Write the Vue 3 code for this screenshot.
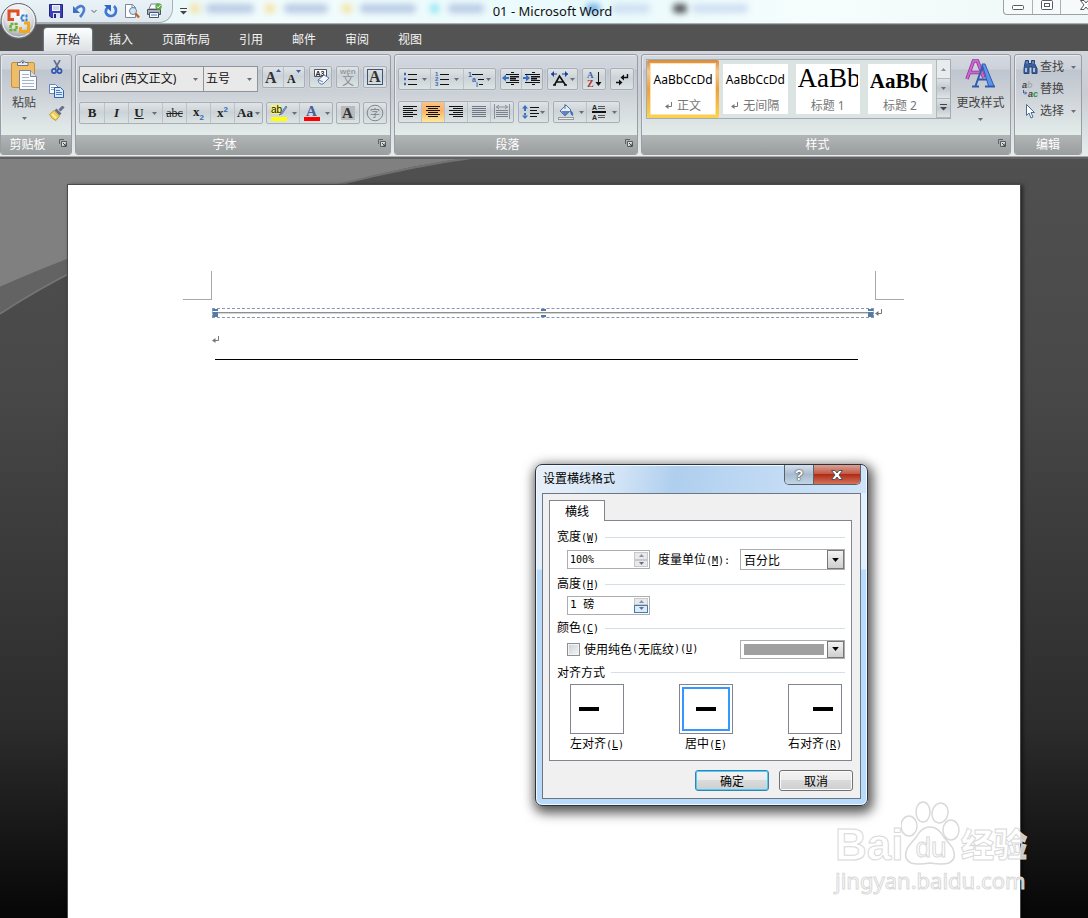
<script setup>
import { ref, h } from 'vue'

const tabs = ['开始', '插入', '页面布局', '引用', '邮件', '审阅', '视图']
const activeTab = ref('开始')
const activeStyle = ref('正文')
const styles = [
  { name: '正文', sample: 'AaBbCcDd', kind: 'plain', mark: true },
  { name: '无间隔', sample: 'AaBbCcDd', kind: 'plain', mark: true },
  { name: '标题 1', sample: 'AaBb', kind: 'h1' },
  { name: '标题 2', sample: 'AaBb(', kind: 'h2' },
]
const widthValue = ref('100%')
const heightValue = ref('1 磅')
const unit = ref('百分比')
const solid = ref(false)
const align = ref('E')
const aligns = [
  { key: 'L', name: '左对齐', side: 'left' },
  { key: 'E', name: '居中', side: 'mid' },
  { key: 'R', name: '右对齐', side: 'right' },
]
const blurs = [
  { x: 190, c: '#f3e2a0', w: 10 }, { x: 206, c: '#b9cbe4', w: 48 },
  { x: 265, c: '#f3e2a0', w: 10 }, { x: 284, c: '#b9cbe4', w: 44 },
  { x: 342, c: '#f3e2a0', w: 10 }, { x: 360, c: '#b9cbe4', w: 56 },
  { x: 430, c: '#8de6f2', w: 9 }, { x: 448, c: '#b9cbe4', w: 36 },
  { x: 586, c: '#6fb0e6', w: 14 }, { x: 612, c: '#cfdff2', w: 38 },
  { x: 673, c: '#4f5257', w: 14 }, { x: 692, c: '#cfdff2', w: 56 },
]

const line = (x1, x2, y, c = '#111') => `<path d="M${x1} ${y}.5H${x2}" stroke="${c}" fill="none"/>`
const rows = (list, c) => list.map(([a, b, y]) => line(a, b, y, c)).join('')

const icons = {
  save: [14, 14, '<path d="M.5.5h13v13H2l-1.500-1.500z" fill="#3b41b5" stroke="#23267c"/><path d="M3 1h8v6H3z" fill="#f4f6ff"/><path d="M4 3h6M4 5h6" stroke="#a9b4d6"/><path d="M4 9h7v5H4z" fill="#dfe3f2"/><path d="M5 10h2v4H5z" fill="#23267c"/>'],
  undo: [14, 14, '<path d="M3 5Q8 0 10.500 3.500Q12.500 7 7 13" fill="none" stroke="#4a7fd0" stroke-width="2.600"/><path d="M0 2v7h7z" fill="#3d6fc0"/>'],
  redo: [14, 14, '<path d="M4 3Q1 6 2 9Q4 12.500 7.500 12Q12 11 12 6.500Q12 4 10 2" fill="none" stroke="#3f78d0" stroke-width="2.600"/><path d="M0 1h7v6.500z" fill="#3268c4"/>'],
  chev: [8, 5, '<path d="M1.500 1l2.500 2.500L6.500 1" fill="none" stroke="#555"/>'],
  preview: [16, 16, '<path d="M1.500 1.500h7l3 3v10h-10z" fill="#fff" stroke="#7c8799"/><path d="M8 1.500v3h3.500" fill="none" stroke="#7c8799"/><circle cx="9" cy="8" r="3.500" fill="#cfe6f6" stroke="#6d87a2"/><path d="M11.500 10.500l3.500 4" stroke="#c26a25" stroke-width="2.500"/>'],
  print: [17, 16, '<path d="M5 1h8l-2 5H3z" fill="#fff" stroke="#7a8290"/><path d="M1.500 6.500h13v5h-13z" fill="#a9b1bf" stroke="#4c5361"/><path d="M3.500 9.500h9v5h-9z" fill="#f7f9fc" stroke="#4c5361"/><path d="M5 12h6" stroke="#3e7bd0"/><circle cx="12.500" cy="3.500" r="3.200" fill="#5cae48"/><path d="M11 3.500l1.200 1.400L14.500 2" stroke="#fff" fill="none"/>'],
  more: [7, 7, '<path d="M0 .5h7" stroke="#444"/><path d="M0 3h7L3.500 6.500z" fill="#444"/>'],
  paste: [28, 32, '<rect x="1.500" y="3.500" width="23" height="25" rx="1.500" fill="#eebd66" stroke="#c4913a"/><path d="M7.500 6.500v-3h3q2-4 4.500 0h3v3z" fill="#e9edf2" stroke="#6d7683"/><circle cx="12.800" cy="3.500" r="1" fill="#545c68"/><path d="M9.500 11.500h11l6 6v13h-17z" fill="#fafcff" stroke="#7b8798"/><path d="M20.500 11.500v6h6" fill="#d6dfea" stroke="#7b8798"/><path d="M12 15.500h7M12 18.500h7M12 21.500h12M12 24.500h12M12 27.500h12" stroke="#a6b4c8"/>'],
  cut: [12, 15, '<path d="M3 0l5 9M9 0L4 9" stroke="#60708a" stroke-width="1.600"/><circle cx="3" cy="11" r="2.100" fill="none" stroke="#2f55b0" stroke-width="1.600"/><circle cx="8.500" cy="11" r="2.100" fill="none" stroke="#2f55b0" stroke-width="1.600"/>'],
  copy: [16, 14, '<path d="M.5.5h6l3 3v6h-9z" fill="#fff" stroke="#5f86bd"/><path d="M2 3.500h4M2 5.500h5" stroke="#7b9ccd"/><path d="M5.500 3.500h6l3 3v7h-9z" fill="#dceafb" stroke="#2f62a8"/><path d="M7 6.500h4M7 8.500h6M7 10.500h6" stroke="#4d7fc4"/>'],
  brush: [16, 15, '<path d="M14.500 .5l-4 4" stroke="#6a6f8c" stroke-width="3"/><path d="M7.500 2.500l5 5-2 2-5-5z" fill="#6d6f8a"/><path d="M5 4.500l5.500 5.500-3.500 4.500q-4-1-6.500-6z" fill="#f0d15a" stroke="#b3922b" stroke-width=".8"/><path d="M3 8l4 4" stroke="#fff6c0" stroke-width="1.500"/>'],
  launch: [8, 8, '<path d="M.5 5V.5H5" fill="none" stroke="#5c6266"/><path d="M2.500 2.500h5v5h-5z" fill="#d8dcdc" stroke="#555b60"/><path d="M4 4l3 3M7 4.500V7H4.500" stroke="#44484c" fill="none"/>'],
  arrow: [5, 3, '<path d="M0 0h5L2.500 3z" fill="#6a6f76"/>'],
  erase: [18, 18, '<path d="M2.500 1.500h12v7h-12z" fill="#fff" stroke="#47536a"/><text x="3.500" y="7.500" font-size="7" font-weight="700" font-family="Liberation Sans" fill="#222">A3</text><path d="M6 12l6-5 5 3-6 6q-4 1-5-4z" fill="#f4f7ff" stroke="#6077a8"/><path d="M7 12l4 2" stroke="#6077a8"/>'],
  wen: [18, 20, '<text x="1" y="7" font-size="8" font-weight="700" font-family="Liberation Sans" fill="#959a9f">wén</text><text x="3" y="18" font-size="12" font-family="Noto Sans CJK SC" fill="#8c9196">文</text>'],
  frameA: [18, 18, '<rect x="1.500" y="1.500" width="15" height="15" fill="none" stroke="#3f5576"/><text x="3" y="14" font-size="16" font-weight="700" font-family="Liberation Serif" fill="#333">A</text>'],
  growA: [18, 18, '<text x="1" y="15" font-size="16" font-weight="700" font-family="Liberation Serif" fill="#333">A</text><path d="M12 4h5l-2.500-3z" fill="#3b5aa5"/>'],
  shrinkA: [18, 18, '<text x="2" y="15" font-size="12" font-weight="700" font-family="Liberation Serif" fill="#222">A</text><path d="M11 2h5l-2.500 3z" fill="#3b5aa5"/>'],
  mark: [18, 18, '<rect x="1" y="1" width="10" height="9" fill="#f7f36b"/><text x="1" y="9" font-size="10" font-family="Liberation Sans" fill="#111">ab</text><path d="M16 2l-5 7-2 2 3-1 5-7z" fill="#8da4c8" stroke="#56709c" stroke-width=".8"/><rect x="1" y="13" width="16" height="4" fill="#ff0"/>'],
  color: [18, 18, '<text x="3" y="12" font-size="15" font-weight="700" font-family="Liberation Serif" fill="#44619b">A</text><rect x="1" y="13" width="16" height="4" fill="#f00"/>'],
  shadeA: [18, 18, '<rect x="2" y="2" width="14" height="14" fill="#bbb"/><text x="3" y="14" font-size="15" font-weight="700" font-family="Liberation Serif" fill="#333">A</text>'],
  circleZi: [18, 18, '<circle cx="9" cy="9" r="7.800" fill="none" stroke="#7f878c"/><text x="4" y="13" font-size="10" font-family="Noto Sans CJK SC" fill="#777e83">字</text>'],
  bullets: [16, 16, '<path d="M2 3h2M2 8h2M2 13h2" stroke="#3a66b2" stroke-width="2.600"/>' + rows([[6, 15, 3], [6, 15, 8], [6, 15, 13]])],
  numbers: [16, 16, '<g font-size="6" font-weight="700" font-family="Liberation Sans" fill="#3a66b2"><text x="1" y="5">1</text><text x="1" y="10">2</text><text x="1" y="15">3</text></g>' + rows([[6, 15, 3], [6, 15, 8], [6, 15, 13]])],
  multi: [18, 16, '<g font-size="7" font-weight="700" font-family="Liberation Sans" fill="#3a66b2"><text x="1" y="6">1</text><text x="5" y="11">a</text><text x="9" y="16">i</text></g>' + rows([[5, 16, 3], [11, 17, 8], [12, 16, 13]])],
  outdent: [18, 16, rows([[9, 12, 1], [4, 17, 3], [8, 17, 5], [8, 14, 7], [8, 17, 9], [4, 17, 11], [9, 12, 13]]) + '<path d="M8 6h9M8 8h6" stroke="#111"/><path d="M0 7l4-3.500v7zM4 6h3v2H4z" fill="#3b6fc4"/>'],
  indent: [18, 16, rows([[9, 12, 1], [2, 17, 3], [8, 17, 5], [8, 14, 7], [8, 17, 9], [2, 17, 11], [9, 12, 13]]) + '<path d="M8 6h9M8 8h6" stroke="#111"/><path d="M7 7L3 3.500v7zM0 6h3v2H0z" fill="#3b6fc4"/>'],
  asian: [19, 16, '<path d="M3 14h3M14 14h3M4.500 14L9.500 5l6 9M6 11h8" stroke="#111" fill="none" stroke-width="1.600"/><path d="M1 3h6M12 3h6" stroke="#203c9a"/><path d="M4 0L1 3l3 3zM15 0l3 3-3 3z" fill="#203c9a"/>'],
  sort: [18, 18, '<text x="2" y="8" font-size="9" font-weight="700" font-family="Liberation Serif" fill="#3b64ae">A</text><text x="2" y="17" font-size="10" font-weight="700" font-family="Liberation Serif" fill="#a83838">Z</text><path d="M13.500 2v13" stroke="#111"/><path d="M10.500 12h6l-3 4z" fill="#111"/>'],
  marks: [16, 16, '<path d="M13.500 3v3.500H8M2 11.500h5" fill="none" stroke="#111" stroke-width="1.400"/><path d="M10 3.500v6L6.500 6.500zM5 8.500v6l3.500-3z" fill="#111"/>'],
  left: [16, 16, rows([[1, 15, 2], [1, 11, 4], [1, 15, 6], [1, 11, 8], [1, 15, 10], [1, 11, 12]])],
  center: [16, 16, rows([[1, 15, 2], [3, 13, 4], [1, 15, 6], [3, 13, 8], [1, 15, 10], [3, 13, 12]])],
  right: [16, 16, rows([[1, 15, 2], [5, 15, 4], [1, 15, 6], [5, 15, 8], [1, 15, 10], [5, 15, 12]])],
  justify: [16, 16, rows([[1, 15, 2], [1, 15, 4], [1, 15, 6], [1, 15, 8], [1, 15, 10], [1, 15, 12]], '#6f7684')],
  spread: [16, 16, '<path d="M.5 0v15M15.500 0v15M2 3h12M5 1L2.500 3 5 5M11 1l2.500 2L11 5" stroke="#8c9199" fill="none"/>' + rows([[2, 14, 6], [2, 14, 8], [2, 14, 10], [2, 14, 12]], '#7d838c')],
  spacing: [17, 16, '<path d="M0 4.500L3 1l3 3.500zM2 4h2v3H2zM0 11.500L3 15l3-3.500zM2 9h2v3H2z" fill="#3b6fc4"/>' + rows([[8, 17, 3], [8, 15, 6], [8, 17, 9], [8, 15, 12]])],
  bucket: [18, 18, '<path d="M3 8l6-6 5 5-6 6z" fill="#e6eef9" stroke="#58719b"/><path d="M4 8h9l-5 5z" fill="#5b84c4"/><path d="M8 1v5" stroke="#58719b"/><path d="M13 7q4 2 3 6-3-1-3-6z" fill="#3f6db8"/><rect x="1.500" y="14.500" width="15" height="2" fill="#eee" stroke="#999"/>'],
  borders: [18, 18, '<g font-size="7" font-weight="700" font-family="Liberation Sans" fill="#222"><text x="2" y="7">A</text><text x="2" y="17">A</text></g><path d="M2 9h14" stroke="#111" stroke-width="2"/>' + rows([[8, 15, 3], [8, 15, 5], [8, 15, 12], [8, 15, 14]], '#555')],
  up: [5, 3, '<path d="M0 3h5L2.500 0z" fill="#8b9096"/>'],
  changeStyles: [32, 30, '<path d="M2 20L8.500 2h4L19 19M5 13.500h9" fill="none" stroke="#8d3a96" stroke-width="3.600"/><path d="M2 20L8.500 2h4L19 19M5 13.500h9" fill="none" stroke="#cc66d2" stroke-width="2"/><path d="M7 27.500h7M20 27.500h10M10.500 27L18 6M17 6l9 21M13 20.500h9" fill="none" stroke="#2f5cae" stroke-width="2"/><path d="M17 5h3l9 22h-5.500z" fill="#5b93e6" stroke="#2f5cae"/>'],
  find: [15, 14, '<path d="M2.500 .5h3v3h3v-3h3v3l2.500 5v5H9V7H6v6.500H1v-5z" fill="#3b5f9c" stroke="#274577"/><path d="M3 8v4M11 8v4" stroke="#dce9fb" stroke-width="1.400"/><path d="M4 1.500v2M10 1.500v2" stroke="#9dbbe6"/>'],
  replace: [17, 17, '<g font-size="9" font-weight="700" font-family="Liberation Sans"><text x="0" y="7" fill="#444">a<tspan fill="#aaa">b</tspan></text><text x="6" y="16" fill="#444">a<tspan fill="#2d9a3a">c</tspan></text></g><path d="M1.500 9v3h3M3 10.500l1.500 1.500L3 13.500" fill="none" stroke="#3b64ae"/>'],
  pick: [10, 15, '<path d="M1.500.5v11l2.500-2.500 2 5 2-1-2-4.500h3.500z" fill="#fff" stroke="#4c6a94"/>'],
  min: [12, 5, '<rect x=".5" y=".5" width="11" height="4" rx="1" fill="#fff" stroke="#555b63"/>'],
  max: [12, 10, '<rect x=".5" y=".5" width="11" height="9" rx="1" fill="#fff" stroke="#555b63"/><rect x="3.500" y="3.500" width="5" height="3" fill="#fff" stroke="#555b63"/>'],
  close: [12, 10, '<path d="M.5.5H4l2 2.500L8 .5h3.500L8 5l3.500 4.500H8L6 7 4 9.500H.5L4 5z" fill="#fff" stroke="#4f545c"/>'],
  ret: [8, 8, '<path d="M6.500 0v4.500H1" fill="none" stroke="#777"/><path d="M3.500 2v5L0 4.500z" fill="#777"/>'],
  orb: [38, 38, '<defs><radialGradient id="orbFill" cx=".5" cy=".3" r=".75"><stop offset="0" stop-color="#fff"/><stop offset=".55" stop-color="#dcdfe3"/><stop offset="1" stop-color="#85898f"/></radialGradient></defs><circle cx="18.500" cy="19" r="17.500" fill="url(#orbFill)" stroke="#63666b"/><circle cx="18.500" cy="19" r="16" fill="none" stroke="#fff" stroke-opacity=".8"/><g fill="none"><path d="M14 17.500H9V9h9v5" stroke="#dd4f24" stroke-width="3"/><path d="M21.500 13.500h5v5h-5z" stroke="#2f7fd2" stroke-width="2" stroke-dasharray="3 1"/><path d="M10.500 22h6v6h-6z" stroke="#6fae35" stroke-width="2.400" stroke-dasharray="3 1"/><path d="M20.500 25v4.500h8V21H24" stroke="#f2a81d" stroke-width="3"/></g>'],
}
const Ico = (p) => {
  const [w, hh, body] = icons[p.n]
  return h('svg', { width: w, height: hh, viewBox: `0 0 ${w} ${hh}`, innerHTML: body, 'aria-hidden': 'true' })
}
Ico.props = ['n']
</script>

<template>
  <div class="app">
    <header class="titlebar">
      <div class="behind">
        <i v-for="b in blurs" :key="b.x" :style="{ left: b.x + 'px', width: b.w + 'px', background: b.c }"></i>
      </div>
      <div class="quick">
        <button aria-label="保存"><Ico n="save" /></button>
        <button aria-label="撤销"><Ico n="undo" /></button>
        <button class="tiny" aria-label="撤销列表"><Ico n="chev" /></button>
        <button aria-label="重复"><Ico n="redo" /></button>
        <button aria-label="打印预览"><Ico n="preview" /></button>
        <button aria-label="快速打印"><Ico n="print" /></button>
      </div>
      <button class="qmore" aria-label="自定义"><Ico n="more" /></button>
      <h1>01 - Microsoft Word</h1>
      <div class="winbtns">
        <button aria-label="最小化"><Ico n="min" /></button>
        <button aria-label="还原"><Ico n="max" /></button>
        <button aria-label="关闭"><Ico n="close" /></button>
      </div>
    </header>
    <button class="orb" aria-label="Office"><Ico n="orb" /></button>

    <nav class="tabs">
      <button v-for="t in tabs" :key="t" :class="{ on: t === activeTab }" @click="activeTab = t">{{ t }}</button>
    </nav>

    <section class="ribbon">
      <div class="group clip">
        <div class="body">
          <button class="big"><Ico n="paste" /><span>粘贴</span><Ico n="arrow" /></button>
          <div class="stack">
            <button aria-label="剪切"><Ico n="cut" /></button>
            <button aria-label="复制"><Ico n="copy" /></button>
            <button aria-label="格式刷"><Ico n="brush" /></button>
          </div>
        </div>
        <footer><span>剪贴板</span><button aria-label="剪贴板选项"><Ico n="launch" /></button></footer>
      </div>

      <div class="group font">
        <div class="body rows">
          <div class="row">
            <div class="combos">
              <label class="combo fam"><select aria-label="字体"><option>Calibri (西文正文)</option></select><Ico n="arrow" /></label>
              <label class="combo size"><select aria-label="字号"><option>五号</option></select><Ico n="arrow" /></label>
            </div>
            <div class="bar w43"><button aria-label="增大"><Ico n="growA" /></button><button aria-label="缩小"><Ico n="shrinkA" /></button></div>
            <div class="bar w23"><button aria-label="清除格式"><Ico n="erase" /></button></div>
            <div class="bar w23"><button aria-label="拼音"><Ico n="wen" /></button></div>
            <div class="bar w24"><button aria-label="字符边框"><Ico n="frameA" /></button></div>
          </div>
          <div class="row second">
            <div class="bar letters">
              <button><b>B</b></button>
              <button><em>I</em></button>
              <button class="wide"><u>U</u><Ico n="arrow" /></button>
              <button><s>abc</s></button>
              <button><b>x<sub>2</sub></b></button>
              <button><b>x<sup>2</sup></b></button>
              <button class="case"><b>Aa</b><Ico n="arrow" /></button>
            </div>
            <div class="bar w67"><button aria-label="突出显示"><Ico n="mark" /><Ico n="arrow" /></button><button aria-label="字体颜色"><Ico n="color" /><Ico n="arrow" /></button></div>
            <div class="bar w24"><button aria-label="底纹"><Ico n="shadeA" /></button></div>
            <div class="bar w24"><button aria-label="带圈字符"><Ico n="circleZi" /></button></div>
          </div>
        </div>
        <footer><span>字体</span><button aria-label="字体选项"><Ico n="launch" /></button></footer>
      </div>

      <div class="group para">
        <div class="body rows">
          <div class="row">
            <div class="bar w98"><button aria-label="项目符号"><Ico n="bullets" /><Ico n="arrow" /></button><button aria-label="编号"><Ico n="numbers" /><Ico n="arrow" /></button><button class="tight" aria-label="多级列表"><Ico n="multi" /><Ico n="arrow" /></button></div>
            <div class="bar w43"><button aria-label="减少缩进"><Ico n="outdent" /></button><button aria-label="增加缩进"><Ico n="indent" /></button></div>
            <div class="bar w31"><button class="tight" aria-label="中文版式"><Ico n="asian" /><Ico n="arrow" /></button></div>
            <div class="bar w24"><button aria-label="排序"><Ico n="sort" /></button></div>
            <div class="bar w24"><button aria-label="编辑标记"><Ico n="marks" /></button></div>
          </div>
          <div class="row second">
            <div class="bar w116">
              <button aria-label="左对齐"><Ico n="left" /></button>
              <button class="hot" aria-label="居中"><Ico n="center" /></button>
              <button aria-label="右对齐"><Ico n="right" /></button>
              <button aria-label="两端对齐"><Ico n="justify" /></button>
              <button aria-label="分散对齐"><Ico n="spread" /></button>
            </div>
            <div class="bar w31"><button class="tight" aria-label="行距"><Ico n="spacing" /><Ico n="arrow" /></button></div>
            <div class="bar w67"><button aria-label="底纹颜色"><Ico n="bucket" /><Ico n="arrow" /></button><button aria-label="边框"><Ico n="borders" /><Ico n="arrow" /></button></div>
          </div>
        </div>
        <footer><span>段落</span><button aria-label="段落选项"><Ico n="launch" /></button></footer>
      </div>

      <div class="group look">
        <div class="body">
          <div class="gallery">
            <button v-for="s in styles" :key="s.name" class="card" :class="{ sel: s.name === activeStyle }" @click="activeStyle = s.name">
              <span class="paper">
                <span class="sample" :class="s.kind">{{ s.sample }}</span>
                <span class="cap"><Ico v-if="s.mark" n="ret" />{{ s.name }}</span>
              </span>
            </button>
            <div class="scroll">
              <button aria-label="上一行"><Ico n="up" /></button>
              <button aria-label="下一行"><Ico n="arrow" /></button>
              <button aria-label="其他"><Ico n="more" /></button>
            </div>
          </div>
          <button class="big change"><Ico n="changeStyles" /><span>更改样式</span><Ico n="arrow" /></button>
        </div>
        <footer><span>样式</span><button aria-label="样式选项"><Ico n="launch" /></button></footer>
      </div>

      <div class="group edit">
        <div class="body lines">
          <button><i><Ico n="find" /></i>查找<Ico n="arrow" /></button>
          <button><i><Ico n="replace" /></i>替换</button>
          <button><i><Ico n="pick" /></i>选择<Ico n="arrow" /></button>
        </div>
        <footer><span>编辑</span></footer>
      </div>
    </section>

    <main class="desk">
      <svg class="swoosh" width="640" height="400" viewBox="0 0 640 400" aria-hidden="true">
        <path d="M0 0H485Q410 8 337 29Q200 50 68 104Q30 118 0 131z" fill="#808080" />
        <path d="M485 0Q410 10 337 29" fill="none" stroke="#727272" stroke-width="2" />
        <path d="M0 131Q30 117 80 98V113Q36 135 0 158z" fill="#636363" />
        <path d="M0 158Q36 134 80 112" fill="none" stroke="#767676" stroke-width="1.500" />
      </svg>
      <article class="page">
        <div class="corners"><span class="lt"></span><span class="rt"></span></div>
        <div class="rule">
          <div class="selbox"><i></i><i class="mid"></i><i></i></div>
          <Ico n="ret" />
        </div>
        <p class="mark"><Ico n="ret" /></p>
        <hr>
      </article>
    </main>

    <div class="wm" aria-hidden="true">
      <div class="wmrow">
        <span class="bai">Bai</span>
        <span class="paw">
          <svg width="60" height="66" viewBox="0 0 60 66"><g fill="#fff" fill-opacity=".8" stroke="#d9d9d9" stroke-width="1.500"><ellipse cx="8" cy="25" rx="8" ry="10" /><ellipse cx="22" cy="11" rx="7" ry="10" /><ellipse cx="39" cy="12" rx="8" ry="10" transform="rotate(12 39 12)" /><ellipse cx="50" cy="29" rx="8" ry="10" /><path d="M29 26Q37 26 42 35L51 46Q57 57 48 62Q42 64 29 62Q16 64 10 62Q1 57 7 46L16 35Q21 26 29 26z" /></g></svg>
          <b>du</b>
        </span>
        <span class="jy">经验</span>
      </div>
      <div class="url">jingyan.baidu.com</div>
    </div>

    <section class="dialog" role="dialog" aria-labelledby="dlgTitle">
      <header>
        <h2 id="dlgTitle">设置横线格式</h2>
        <div class="dbtns"><button aria-label="帮助">?</button><button class="x" aria-label="关闭"><Ico n="close" /></button></div>
      </header>
      <div class="client">
        <button class="dtab">横线</button>
        <div class="panel">
          <h3><label for="w">宽度<kbd>(<u>W</u>)</kbd></label></h3>
          <div class="line">
            <div class="spin"><input id="w" v-model="widthValue"><span><button aria-label="增加宽度"><Ico n="up" /></button><button aria-label="减小宽度"><Ico n="arrow" /></button></span></div>
            <label class="unit" for="unit">度量单位<kbd>(<u>M</u>):</kbd></label>
            <div class="drop"><select id="unit" v-model="unit"><option>百分比</option></select><i><Ico n="arrow" /></i></div>
          </div>
          <h3><label for="hgt">高度<kbd>(<u>H</u>)</kbd></label></h3>
          <div class="line short">
            <div class="spin"><input id="hgt" v-model="heightValue"><span class="lit"><button aria-label="增加高度"><Ico n="up" /></button><button aria-label="减小高度"><Ico n="arrow" /></button></span></div>
          </div>
          <h3><label for="col">颜色<kbd>(<u>C</u>)</kbd></label></h3>
          <div class="line short">
            <label class="check"><input v-model="solid" type="checkbox">使用纯色<kbd>(</kbd>无底纹<kbd>)(<u>U</u>)</kbd></label>
            <div class="drop push"><select id="col"><option aria-label="灰色"></option></select><em></em><i><Ico n="arrow" /></i></div>
          </div>
          <h3><span>对齐方式</span></h3>
          <div class="tiles">
            <button v-for="a in aligns" :key="a.key" :class="[a.side, { on: a.key === align }]" @click="align = a.key">
              <span class="tile"><i></i></span>
              <span>{{ a.name }}<kbd>(<u>{{ a.key }}</u>)</kbd></span>
            </button>
          </div>
        </div>
        <div class="actions"><button class="ok">确定</button><button>取消</button></div>
      </div>
    </section>
  </div>
</template>

<style>
body { margin: 0; }
</style>

<style scoped>
* { box-sizing: border-box; }
.app { position: relative; display: flex; flex-direction: column; min-height: 100vh; overflow: hidden; font: 12px/16px "Noto Sans", "Noto Sans CJK SC", sans-serif; color: #222; }
button { display: flex; align-items: center; justify-content: center; margin: 0; padding: 0; border: 0; background: none; font: inherit; color: inherit; white-space: nowrap; }
svg { display: block; flex: none; }
select, input { font: inherit; color: #000; border: 0; margin: 0; padding: 0; background: none; outline: none; border-radius: 0; }
select { appearance: none; }
h1, h2, h3, p { margin: 0; font: inherit; }

.titlebar { position: relative; display: flex; height: 24px; background: linear-gradient(90deg, #dff1f5, #f2fcfd 25%, #e9fafc 55%, #f6fdfd 75%, #f0f7f7); border-bottom: 1px solid #a9aeb1; }
.behind { position: absolute; inset: 0; overflow: hidden; }
.behind i { position: absolute; top: 4px; height: 9px; border-radius: 4px; filter: blur(3px); }
.quick { position: relative; display: flex; align-items: center; gap: 10px; width: 173px; padding: 0 8px 0 49px; border: 1px solid #a7b1b9; border-width: 0 1px 1px 0; border-radius: 0 0 14px 0; background: linear-gradient(#e9f2f7, #dfe9ef); }
.quick .tiny { margin: 0 -4px 0 -7px; }
.quick button:nth-child(n+5) { margin-left: -4px; }
.qmore { position: relative; width: 21px; }
.titlebar h1 { position: relative; flex: 1; font-size: 13px; line-height: 22px; text-align: center; padding-right: 92px; color: #111; }
.winbtns { position: relative; display: flex; flex: none; width: 85px; height: 15px; border: 1px solid #9aa1a6; border-width: 0 0 1px 1px; border-radius: 0 0 0 4px; background: #f6fafa; }
.winbtns button { flex: 0 0 28px; height: 14px; }
.winbtns button + button { border-left: 1px solid #aab0b4; padding-bottom: 4px; }
.winbtns button:last-child { flex-basis: 50px; }
.orb { position: absolute; left: 0; top: 2px; z-index: 3; }

.tabs { display: flex; gap: 5px; height: 27px; padding: 3px 0 0 44px; background: #535353; border-top: 1px solid #6a6a6a; color: #f4f4f4; }
.tabs button { padding: 0 12px; line-height: 22px; height: 23px; border-radius: 3px 3px 0 0; }
.tabs .on { background: linear-gradient(#fdfefe, #dde1e5); color: #222; box-shadow: 0 0 2px #9fd6e0; }

.ribbon { display: flex; gap: 3px; height: 105px; padding: 3px 6px 1px 0; background: linear-gradient(#d2d6dc, #c9cdd3 40%, #e6edec); box-shadow: 0 1px 0 #a9acad, 0 3px 0 #626262; position: relative; z-index: 2; }
.group { display: flex; flex-direction: column; flex: none; border: 1px solid #989da3; border-radius: 3px; background: linear-gradient(#d4d8df 0, #cdd2da 14px, #bfc5cf 15px, #cdd2d8 40px, #e4ecea 80px); overflow: hidden; box-shadow: inset 1px 1px 0 #e6e9ed; }
.clip { width: 72px; }
.font { width: 316px; }
.para { width: 244px; }
.look { flex: 1 0 370px; }
.edit { width: 68px; }
.body { display: flex; flex: 1; }
.group footer { display: flex; align-items: center; height: 19px; padding-right: 3px; background: linear-gradient(#b1b5b5, #9a9e9e); color: #fff; line-height: 18px; }
.group footer span { flex: 1; text-align: center; padding-right: 4px; }
.group footer button { width: 10px; height: 16px; align-items: flex-start; padding-top: 2px; }
.edit footer { padding: 0; }
.edit footer span { padding: 0; }

.big { flex-direction: column; justify-content: flex-start; width: 46px; padding-top: 4px; color: #444; }
.big svg + span { margin: 4px 0 6px; }
.stack { display: flex; flex-direction: column; gap: 8px; padding-top: 5px; }
.stack button { width: 20px; height: 15px; }

.rows { flex-direction: column; padding: 11px 3px 0; }
.para .rows { padding-top: 13px; }
.row { display: flex; align-items: flex-start; gap: 4px; height: 26px; }
.second { margin-top: 10px; height: 22px; }
.font .second { gap: 3px; }
.para .second { margin-top: 7px; }
.combos { display: flex; width: 179px; }
.combo { position: relative; display: flex; align-items: center; height: 26px; border: 1px solid #8f9499; background: #e9e9e9; padding-right: 5px; }
.combo select { flex: 1; min-width: 0; height: 24px; padding-left: 2px; color: #111; }
.fam { width: 125px; }
.size { width: 55px; margin-left: -1px; }
.bar { display: flex; height: 22px; border: 1px solid #a9afb5; border-radius: 2px; background: linear-gradient(#dfe4e6, #ccd3d8 45%, #dce3e3); box-shadow: 0 0 0 1px #dde2e655; }
.bar button { flex: 1; min-width: 0; gap: 4px; }
.bar button.tight { gap: 1px; }
.bar button + button { border-left: 1px solid #bcc2c8; }
.w23 { width: 23px; } .w24 { width: 24px; } .w31 { width: 31px; } .w43 { width: 43px; } .w67 { width: 67px; } .w98 { width: 98px; } .w116 { width: 116px; }
.letters { width: 184px; font-family: "Liberation Serif", serif; font-size: 13px; font-weight: 700; color: #222; }
.letters button { flex: 0 0 24px; }
.letters .wide { flex-basis: 34px; gap: 8px; }
.letters .case { flex: 1; gap: 2px; }
.letters s { font-size: 12px; font-weight: 400; }
.letters sub, .letters sup { font: 700 8px/8px "Liberation Sans", sans-serif; color: #3468b8; }
.hot { background: linear-gradient(#f6c58c, #f9b366 45%, #fde89a); }

.gallery { display: flex; flex: 1; height: 60px; margin: 4px 0 0 4px; border: 1px solid #a6acb3; background: #dce4e3; }
.card { flex: 1 0 72px; height: 58px; padding: 4px; align-items: stretch; border-radius: 2px; }
.card.sel { background: linear-gradient(#d9893f, #f7c98c 20%, #ed9f3e 50%, #fbd04a 95%); }
.card.sel .paper { outline: 1px solid #fde3b0; }
.paper { display: flex; flex-direction: column; flex: 1; width: 64px; background: #fff; overflow: hidden; }
.sample { display: flex; align-items: center; justify-content: center; height: 32px; color: #000; }
.h1, .h2 { justify-content: flex-start; margin: 0 2px; overflow: hidden; font-family: "Liberation Serif", serif; }
.h1 { font-size: 27px; height: 28px; }
.h2 { font-size: 21px; font-weight: 700; height: 34px; }
.cap { display: flex; align-items: center; justify-content: center; gap: 4px; height: 17px; color: #777; margin-top: auto; }
.scroll { display: flex; flex-direction: column; flex: none; width: 14px; }
.scroll button { flex: 1; border: 1px solid #b3b8be; border-width: 0 0 1px 1px; background: linear-gradient(#dfe3e7, #c2c8cf 50%, #dfe4e6); }
.scroll button:first-child { background: #e9ecef; }
.change { width: 59px; }
.change svg + span { margin: 6px 0 7px; }

.lines { flex-direction: column; padding: 4px 0 0 5px; gap: 6px; }
.lines button { justify-content: flex-start; height: 16px; color: #444; }
.lines i { width: 20px; display: flex; justify-content: center; }
.lines button svg:last-child:not(i svg) { margin-left: 7px; }

.desk { position: relative; flex: 1; display: flex; flex-direction: column; padding-top: 29px; background: linear-gradient(#505050, #484848 30%, #2c2c2c 75%, #060606); }
.swoosh { position: absolute; left: 0; top: 0; }
.page { position: relative; flex: 1; width: 87.5%; min-width: 700px; margin: 0 auto; padding: 86px 116px 0 115px; background: #fff; box-shadow: 0 0 0 1px #4b4b4b, 2px 1px 4px 1px #0008; }
.corners { display: flex; justify-content: space-between; height: 29px; }
.corners span { width: 29px; border: 1px solid #a9a9a9; }
.corners .lt { border-width: 0 1px 1px 0; }
.corners .rt { border-width: 0 0 1px 1px; }
.rule { display: flex; align-items: center; gap: 1px; margin: 8px 21px 0 29px; height: 10px; }
.selbox { position: relative; flex: 1; display: flex; justify-content: space-between; align-items: center; height: 10px; border: 1px dashed #7f99bd; background: linear-gradient(#fff 3px, #8f8f8f 3px, #8f8f8f 4px, #d5d5d5 4px, #d5d5d5 5px, #fff 5px); }
.selbox i { width: 5px; height: 8px; border-top: 2px solid #547aa5; }
.selbox i:not(.mid) { border-bottom: 5px solid #547aa5; }
.selbox .mid { border-bottom: 2px solid #547aa5; }
.mark { margin: 18px 0 0 29px; height: 8px; }
hr { margin: 15px 46px 0 32px; border: 0; height: 1px; background: #000; }

.dialog { position: absolute; left: 535px; top: 464px; width: 333px; padding: 0 6px 6px; border: 1px solid #2b343e; border-radius: 7px; background: linear-gradient(100deg, #e4effa 5%, #d3e4f6 25%, #afcfee 42%, #c4dcf5 75%, #cfe3f8) top / 100% 28px no-repeat, linear-gradient(#e2f0fd 104px, #b9dbfb 105px); box-shadow: inset 0 0 0 1px #f1f8ff, 2px 4px 12px 3px #000a; color: #000; z-index: 4; font-family: "Noto Sans CJK SC", sans-serif; }
.dialog header { display: flex; justify-content: space-between; height: 28px; }
.dialog h2 { padding: 5px 0 0 1px; }
.dbtns { display: flex; width: 77px; height: 20px; border: 1px solid #59636e; border-top: 0; border-radius: 0 0 5px 5px; overflow: hidden; }
.dbtns button { flex: 1; background: linear-gradient(#d4e0ec, #a9bccf 50%, #c2d5e6); font: 700 14px/18px "Liberation Sans", sans-serif; color: #fff; text-shadow: 0 0 1px #333, 0 0 2px #333; }
.dbtns .x { flex: 0 0 47px; border-left: 1px solid #59636e; background: linear-gradient(#dda093, #c05844 48%, #b02c15 50%, #d4735b); }
.client { display: flex; flex-direction: column; border: 1px solid #6d7681; background: #f0f0f0; padding: 6px 8px 7px 6px; }
.dtab { position: relative; width: 56px; height: 21px; border: 1px solid #82858f; border-bottom: 0; background: #fff; margin-bottom: -1px; z-index: 1; }
.panel { border: 1px solid #82858f; background: #fff; padding: 2px 6px 7px 7px; }
.dialog kbd { font: 10px/16px "DejaVu Sans Mono", monospace; }
.dialog kbd u { text-underline-offset: 1px; }
h3 { display: flex; align-items: center; gap: 6px; height: 18px; margin-top: 5px; }
h3::after { content: ""; flex: 1; height: 1px; background: #d5dfe8; }
.line { display: flex; align-items: center; height: 21px; margin-top: 3px; padding-left: 10px; }
.line.short { height: 18px; }
.spin { display: flex; width: 83px; height: 19px; border: 1px solid #abadb3; background: #fff; }
.spin input { flex: 1; min-width: 0; padding-left: 2px; font: 10px/16px "DejaVu Sans Mono", "Noto Sans CJK SC", monospace; }
#hgt { font-size: 11px; }
.spin span { display: flex; flex-direction: column; width: 16px; padding: 1px; }
.spin button { flex: 1; background: #e9e9ea; border: 1px solid #c6c8cc; }
.spin svg { filter: hue-rotate(20deg) saturate(4); }
.lit button:last-child { border-color: #3c7fb1; background: #dcebf6; }
.unit { margin-left: 8px; }
.drop { position: relative; display: flex; width: 105px; height: 21px; margin-left: auto; border: 1px solid #abadb3; background: #fff; }
.short .drop { height: 19px; }
.drop select { width: 100%; padding: 0 20px 0 3px; }
.drop i { position: absolute; right: 0; top: 0; bottom: 0; width: 17px; display: flex; align-items: center; justify-content: center; border: 1px solid #777; background: linear-gradient(#f2f2f2, #cfcfcf); pointer-events: none; }
.drop i svg { width: 7px; height: 4px; filter: brightness(0); }
.drop em { position: absolute; inset: 3px 20px 3px 3px; background: #a0a0a0; pointer-events: none; }
.check { display: flex; align-items: center; }
.check input { appearance: none; width: 13px; height: 13px; margin-right: 4px; border: 1px solid #8e8f8f; box-shadow: inset 0 0 0 1px #f4f4f4; background: linear-gradient(135deg, #cbd0d6, #f5f5f5); }
.tiles { display: flex; justify-content: space-between; margin-top: 3px; padding: 0 3px 0 13px; }
.tiles button { flex-direction: column; width: 54px; line-height: 18px; }
.tile { display: flex; align-items: center; justify-content: center; width: 54px; height: 50px; border: 1px solid #82858f; background: #fff; }
.tile i { width: 20px; height: 4px; background: #000; }
.left .tile { justify-content: flex-start; padding-left: 8px; }
.right .tile { justify-content: flex-end; padding-right: 8px; }
.on .tile { box-shadow: inset 0 0 0 2px #fff, inset 0 0 0 4px #3399ff; }
.actions { display: flex; justify-content: flex-end; gap: 10px; margin: 9px -1px 0 0; }
.actions button { width: 74px; height: 21px; border: 1px solid #707070; border-radius: 3px; background: linear-gradient(#f2f2f2, #ebebeb 50%, #dadada 50%, #cfcfcf); box-shadow: inset 0 0 0 1px #fcfcfc; }
.actions .ok { border-color: #3c7fb1; box-shadow: inset 0 0 0 1px #46d2f5; }

.wm { position: absolute; left: 835px; top: 801px; z-index: 3; color: #fffc; -webkit-text-stroke: 1px #d9d9d9; font-family: "Liberation Sans", "Noto Sans CJK SC", sans-serif; pointer-events: none; }
.wmrow { display: flex; align-items: flex-end; height: 66px; }
.bai { font-size: 44px; font-weight: 700; line-height: 44px; width: 66px; }
.paw { position: relative; }
.paw b { position: absolute; left: 0; right: 0; bottom: 4px; text-align: center; font: 400 28px/30px "Liberation Sans", sans-serif; }
.jy { font-size: 33px; line-height: 42px; font-weight: 900; }
.url { font: 22px/26px "Noto Sans", sans-serif; }
</style>
